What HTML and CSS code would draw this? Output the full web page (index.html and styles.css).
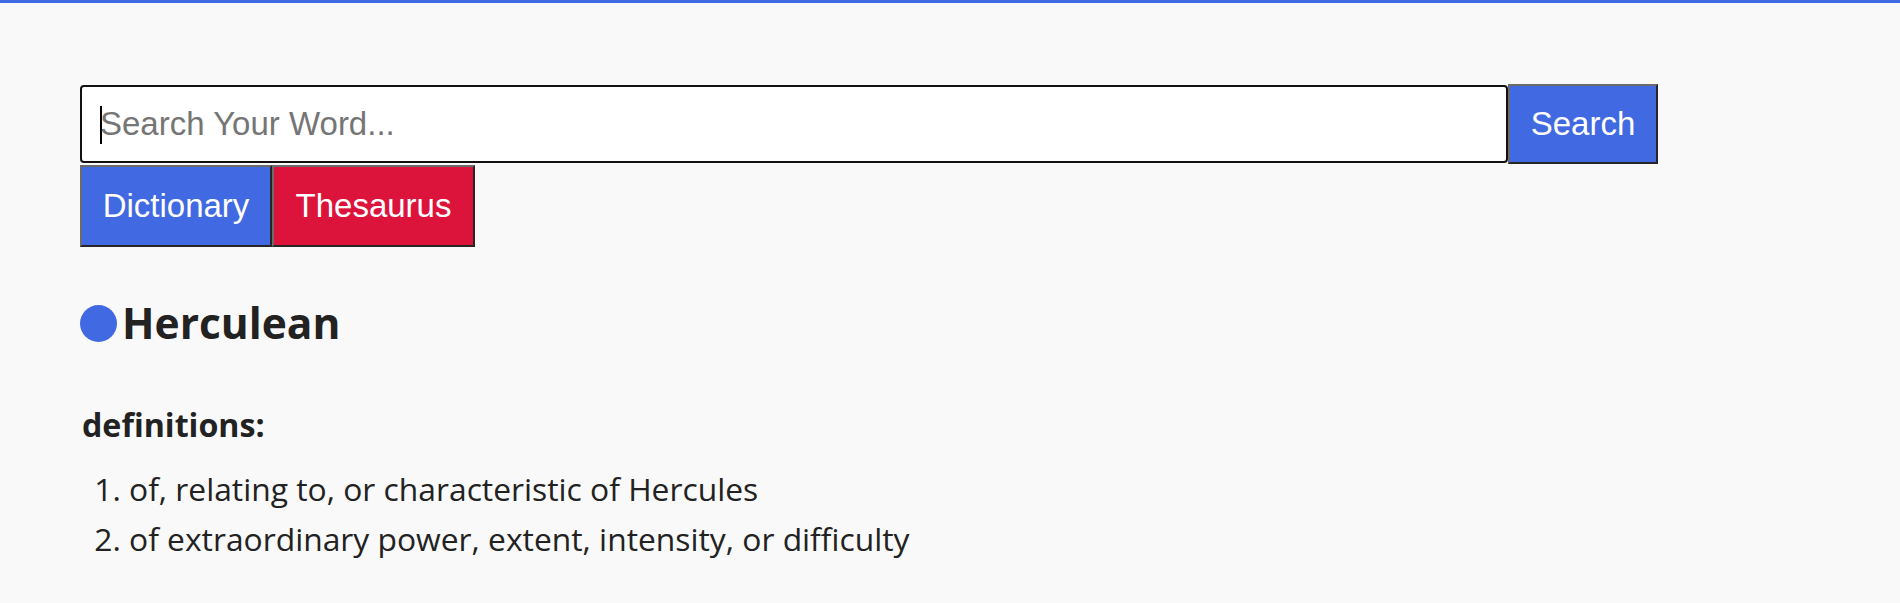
FILE: index.html
```html
<!DOCTYPE html>
<html lang="en">
<head>
<meta charset="utf-8">
<title>Dictionary</title>
<link rel="stylesheet" href="styles.css">
</head>
<body>
<main class="app">
  <form class="search-row" onsubmit="return false">
    <div class="input-wrap">
      <input class="search-input" type="text" placeholder="Search Your Word...">
      <span class="caret"></span>
    </div>
    <button class="btn btn-search" type="submit">Search</button>
  </form>
  <div class="tabs">
    <button class="btn btn-dict" type="button">Dictionary</button>
    <button class="btn btn-thes" type="button">Thesaurus</button>
  </div>
  <section class="result">
    <h1 class="word"><span class="dot"></span><span class="word-text">Herculean</span></h1>
    <h3 class="def-title">definitions:</h3>
    <ol class="defs">
      <li>of, relating to, or characteristic of Hercules</li>
      <li>of extraordinary power, extent, intensity, or difficulty</li>
    </ol>
  </section>
</main>
</body>
</html>
```
FILE: styles.css
```css
* { box-sizing: border-box; }
html, body { margin: 0; padding: 0; }
body {
  background: #f9f9f9;
  border-top: 3px solid #4169e1;
  font-family: "Open Sans", "Noto Sans", sans-serif;
  color: #222222;
  min-height: 603px;
}
.app {
  padding: 81px 0 0 80px;
}
.search-row {
  display: flex;
  align-items: center;
  margin: 0;
}
.input-wrap {
  position: relative;
  display: flex;
}
.search-input {
  width: 1428px;
  height: 78px;
  border: 2px solid #111111;
  border-radius: 4px;
  background: #ffffff;
  padding: 0 18px;
  font-family: "Liberation Sans", Arial, sans-serif;
  font-size: 33px;
  color: #222;
  outline: none;
}
.search-input::placeholder { color: #757575; }
.caret {
  position: absolute;
  left: 20px;
  top: 21px;
  width: 2px;
  height: 38px;
  background: #000000;
}
.btn {
  font-family: "Liberation Sans", Arial, sans-serif;
  font-size: 33px;
  color: #ffffff;
  border-width: 2px;
  border-style: solid;
  border-color: #6b6b6b #262626 #262626 #6b6b6b;
  padding: 0;
  margin: 0;
  cursor: pointer;
}
.btn-search {
  background: #4169e1;
  height: 80px;
  width: 150px;
}
.tabs {
  display: flex;
  margin-top: 1px;
}
.btn-dict { background: #4169e1; height: 82px; width: 192px; }
.btn-thes { background: #dc143c; height: 82px; width: 203px; }
.result { padding-top: 54px; }
.word {
  display: flex;
  align-items: center;
  gap: 5px;
  margin: 0;
  font-size: 42.5px;
  font-weight: 700;
  line-height: 44px;
}
.dot {
  width: 37px;
  height: 37px;
  border-radius: 50%;
  background: #4169e1;
  flex: none;
}
.def-title {
  margin: 60px 0 0 2px;
  font-size: 32.2px;
  font-weight: 700;
  line-height: 40px;
}
.defs {
  margin: 19px 0 0 0;
  padding-left: 49px;
  font-size: 31.8px;
  line-height: 50px;
}
```
